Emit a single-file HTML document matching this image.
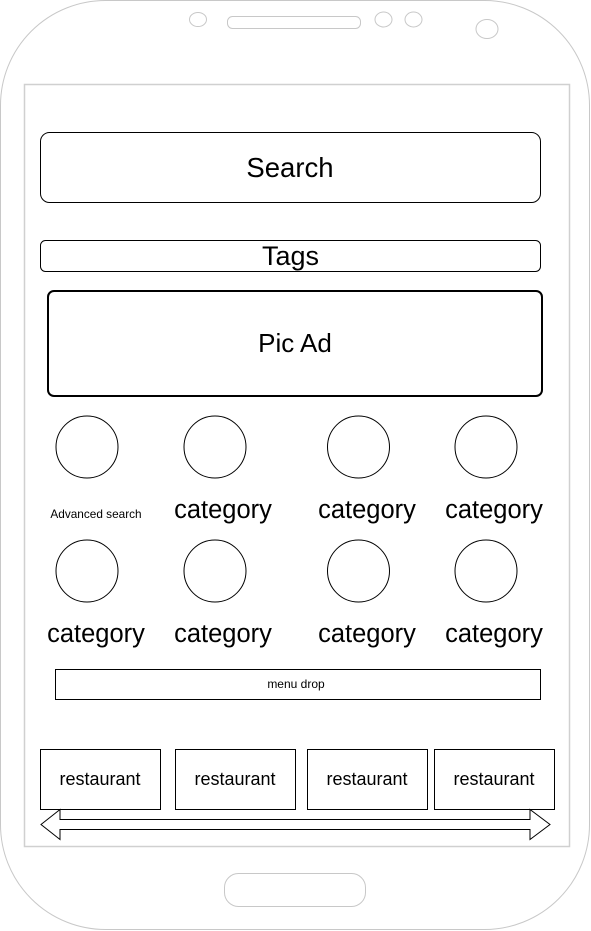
<!DOCTYPE html>
<html><head><meta charset="utf-8"><style>
html,body{margin:0;padding:0;background:#fff;}
svg{display:block;font-family:"Liberation Sans",Arial,sans-serif;}
</style></head><body>
<svg width="591" height="931" viewBox="0 0 591 931" xmlns="http://www.w3.org/2000/svg">
<rect x="0.5" y="0.5" width="589" height="929" rx="105" ry="105" fill="#fff" stroke="#c8c8c8"/>
<rect x="24.5" y="84.5" width="545" height="762" fill="#fff" stroke="#d0d0d0" stroke-width="1.5"/>
<ellipse cx="198" cy="19.5" rx="8.5" ry="7" fill="none" stroke="#c8c8c8"/>
<rect x="227.5" y="16.5" width="133" height="12" rx="5" fill="none" stroke="#c8c8c8"/>
<ellipse cx="383.5" cy="19.5" rx="8.5" ry="7.5" fill="none" stroke="#c8c8c8"/>
<ellipse cx="413.5" cy="19.5" rx="8.5" ry="7.5" fill="none" stroke="#c8c8c8"/>
<ellipse cx="487" cy="29" rx="11" ry="9.5" fill="none" stroke="#c8c8c8"/>
<rect x="224.5" y="873.5" width="141" height="33" rx="14" fill="none" stroke="#c8c8c8"/>

<rect x="40.5" y="132.5" width="500" height="70" rx="9" fill="#fff" stroke="#000"/>
<text x="290" y="177" font-size="27.5" text-anchor="middle">Search</text>
<rect x="40.5" y="240.5" width="500" height="31" rx="5" fill="#fff" stroke="#000"/>
<text x="290.5" y="265" font-size="27" text-anchor="middle">Tags</text>
<rect x="48" y="291" width="494" height="105" rx="6" fill="#fff" stroke="#000" stroke-width="2"/>
<text x="295" y="352" font-size="26" text-anchor="middle">Pic Ad</text>

<g fill="#fff" stroke="#000">
<circle cx="87" cy="447" r="31"/><circle cx="215" cy="447" r="31"/><circle cx="358.5" cy="447" r="31"/><circle cx="486" cy="447" r="31"/>
<circle cx="87" cy="571" r="31"/><circle cx="215" cy="571" r="31"/><circle cx="358.5" cy="571" r="31"/><circle cx="486" cy="571" r="31"/>
</g>
<g font-size="25.5" text-anchor="middle">
<text x="96" y="518" font-size="11.8">Advanced search</text>
<text x="223" y="518">category</text><text x="367" y="518">category</text><text x="494" y="518">category</text>
<text x="96" y="642">category</text><text x="223" y="642">category</text><text x="367" y="642">category</text><text x="494" y="642">category</text>
</g>
<rect x="55.5" y="669.5" width="485" height="30" fill="#fff" stroke="#000"/>
<text x="296" y="688" font-size="12" text-anchor="middle">menu drop</text>

<g fill="#fff" stroke="#000">
<rect x="40.5" y="749.5" width="120" height="60"/>
<rect x="175.5" y="749.5" width="120" height="60"/>
<rect x="307.5" y="749.5" width="120" height="60"/>
<rect x="434.5" y="749.5" width="120" height="60"/>
</g>
<g font-size="18" text-anchor="middle">
<text x="100" y="785">restaurant</text><text x="235" y="785">restaurant</text><text x="367" y="785">restaurant</text><text x="494" y="785">restaurant</text>
</g>
<path d="M41,824.5 L60,809.5 L60,819.5 L530,819.5 L530,809.5 L550,824.5 L530,839.5 L530,829.5 L60,829.5 L60,839.5 Z" fill="#fff" stroke="#000"/>
</svg>
</body></html>
